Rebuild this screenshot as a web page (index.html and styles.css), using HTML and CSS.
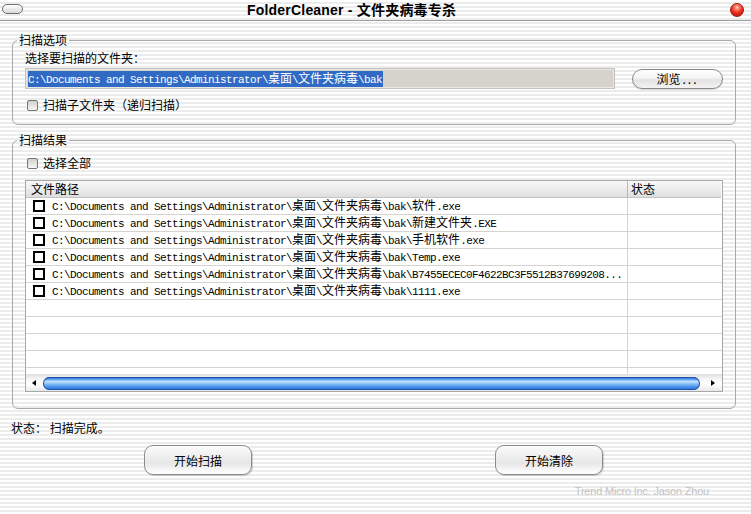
FILE: index.html
```html
<!DOCTYPE html>
<html>
<head>
<meta charset="utf-8">
<link rel="stylesheet" href="styles.css">
</head>
<body>
<div class="titlebar">
  <div class="capsule"></div>
  <div class="title">FolderCleaner - 文件夹病毒专杀</div>
  <div class="close"></div>
</div>
<div class="main">
  <fieldset class="group g1">
    <legend>扫描选项</legend>
    <div class="label">选择要扫描的文件夹：</div>
    <div class="pathrow">
      <div class="pathbox"><span class="sel mono">C:\Documents and Settings\Administrator\<span class="c">桌面</span>\<span class="c">文件夹病毒</span>\bak</span></div>
      <div class="browse">浏览<span class="dots">...</span></div>
    </div>
    <div class="check">
      <span class="cb"></span><span>扫描子文件夹（递归扫描）</span>
    </div>
  </fieldset>

  <fieldset class="group g2">
    <legend>扫描结果</legend>
    <div class="check check2">
      <span class="cb"></span><span>选择全部</span>
    </div>
    <div class="list">
      <div class="lhead">
        <div class="hcell h1">文件路径</div>
        <div class="hcell h2">状态</div>
      </div>
      <div class="row"><div class="cell"><span class="rcb"></span><span class="mono">C:\Documents and Settings\Administrator\<span class="c">桌面</span>\<span class="c">文件夹病毒</span>\bak\<span class="c">软件</span>.exe</span></div><div class="cell s"></div></div>
      <div class="row"><div class="cell"><span class="rcb"></span><span class="mono">C:\Documents and Settings\Administrator\<span class="c">桌面</span>\<span class="c">文件夹病毒</span>\bak\<span class="c">新建文件夹</span>.EXE</span></div><div class="cell s"></div></div>
      <div class="row"><div class="cell"><span class="rcb"></span><span class="mono">C:\Documents and Settings\Administrator\<span class="c">桌面</span>\<span class="c">文件夹病毒</span>\bak\<span class="c">手机软件</span>.exe</span></div><div class="cell s"></div></div>
      <div class="row"><div class="cell"><span class="rcb"></span><span class="mono">C:\Documents and Settings\Administrator\<span class="c">桌面</span>\<span class="c">文件夹病毒</span>\bak\Temp.exe</span></div><div class="cell s"></div></div>
      <div class="row"><div class="cell"><span class="rcb"></span><span class="mono">C:\Documents and Settings\Administrator\<span class="c">桌面</span>\<span class="c">文件夹病毒</span>\bak\B7455ECEC0F4622BC3F5512B37699208...</span></div><div class="cell s"></div></div>
      <div class="row"><div class="cell"><span class="rcb"></span><span class="mono">C:\Documents and Settings\Administrator\<span class="c">桌面</span>\<span class="c">文件夹病毒</span>\bak\1111.exe</span></div><div class="cell s"></div></div>
      <div class="row"><div class="cell"></div><div class="cell s"></div></div>
      <div class="row"><div class="cell"></div><div class="cell s"></div></div>
      <div class="row"><div class="cell"></div><div class="cell s"></div></div>
      <div class="row"><div class="cell"></div><div class="cell s"></div></div>
      <div class="row filler"><div class="cell"></div><div class="cell s"></div></div>
      <div class="hscroll">
        <div class="arrow left"></div>
        <div class="thumb"></div>
        <div class="arrow right"></div>
      </div>
    </div>
  </fieldset>

  <div class="status">状态： 扫描完成。</div>
  <div class="buttons">
    <div class="btn">开始扫描</div>
    <div class="btn">开始清除</div>
  </div>
  <div class="credit">Trend Micro Inc. Jason Zhou</div>
</div>
</body>
</html>
```

FILE: styles.css
```css
html, body {
  margin: 0;
  padding: 0;
}
body {
  width: 751px;
  height: 514px;
  overflow: hidden;
  background: repeating-linear-gradient(to bottom, #ffffff 0px, #ffffff 2px, #ececec 2px, #ececec 4px);
  font-family: "Noto Sans CJK SC", sans-serif;
  font-size: 12px;
  color: #000;
}

.titlebar {
  height: 20px;
  border-bottom: 1px solid #9c9c9c;
  display: flex;
  align-items: center;
  padding: 0 7px 0 2px;
  box-sizing: content-box;
}
.capsule {
  width: 19px;
  height: 8px;
  border: 1px solid #6e6e6e;
  border-radius: 6px;
  background: linear-gradient(#ffffff, #d8d8d8);
  margin-top: -2px;
}
.title {
  margin-left: 224px;
  font-family: "Liberation Sans", "Noto Sans CJK SC", sans-serif;
  font-weight: bold;
  font-size: 14px;
  line-height: 16px;
  letter-spacing: 0.2px;
}
.close {
  margin-left: auto;
  width: 12px;
  height: 12px;
  border-radius: 50%;
  border: 1px solid #9a1a12;
  background: radial-gradient(circle at 50% 28%, #ffd0c4 0, #ff7a62 22%, #e5281a 55%, #b31208 100%);
}

.main {
  padding: 12px 15px 0 12px;
}

.group {
  margin: 0;
  padding: 0 12px;
  border: 1px solid #a9a9a9;
  border-radius: 6px;
  min-width: 0;
}
.group legend {
  padding: 0 2px;
  margin-left: -8px;
  line-height: 14px;
}
.g1 {
  padding-bottom: 12px;
}
.label {
  margin-top: 4px;
  line-height: 14px;
}
.pathrow {
  display: flex;
  align-items: center;
  margin-top: 3px;
}
.pathbox {
  width: 590px;
  height: 21px;
  box-sizing: border-box;
  border: 1px solid #c4c2bc;
  box-shadow: inset 0 0 0 1px #e9e7e2;
  background: #d6d3cc;
  display: flex;
  align-items: center;
  padding-left: 2px;
}
.mono {
  font-family: "Liberation Mono", monospace;
  font-size: 11px;
  line-height: 16px;
  letter-spacing: -0.6px;
  white-space: nowrap;
}
.mono .c {
  font-family: "Noto Sans CJK SC", sans-serif;
  font-size: 12px;
  line-height: 14px;
  letter-spacing: 0;
}
.sel {
  background: #316ac5;
  color: #fff;
  height: 16px;
  display: inline-block;
  padding-right: 1px;
}
.browse {
  margin-left: 17px;
  width: 91px;
  height: 20px;
  box-sizing: border-box;
  border: 1px solid #8a8a8a;
  border-radius: 10px;
  background: linear-gradient(#ffffff 0%, #f3f3f3 45%, #e2e2e2 55%, #f4f4f4 100%);
  box-shadow: 0 1px 1px rgba(0,0,0,0.15);
  display: flex;
  align-items: center;
  justify-content: center;
  line-height: 14px;
}
.dots {
  letter-spacing: 2px;
  margin-left: 2px;
}

.check {
  display: flex;
  align-items: center;
  margin-top: 9px;
  line-height: 14px;
  padding-left: 2px;
}
.cb {
  width: 11px;
  height: 11px;
  box-sizing: border-box;
  border: 1px solid #6f7d6f;
  border-radius: 2px;
  background: linear-gradient(#d0d0cc, #f6f6f4);
  margin-right: 5px;
}

.g2 {
  margin-top: 8px;
  padding-bottom: 16px;
}
.check2 {
  margin-top: 9px;
}
.list {
  margin-top: 10px;
  border: 1px solid #a8a8a8;
  background: #fff;
}
.lhead {
  display: grid;
  grid-template-columns: 602px 1fr;
  height: 16px;
  border-bottom: 1px solid #c4c4c4;
  background: linear-gradient(#f8f8f8 0%, #ededed 50%, #dedede 100%);
  margin-right: 1px;
}
.hcell {
  line-height: 16px;
  height: 16px;
}
.h1 {
  padding-left: 5px;
  border-right: 1px solid #b8b8b8;
}
.h2 {
  padding-left: 3px;
}
.row {
  display: grid;
  grid-template-columns: 602px 1fr;
  height: 16px;
  border-bottom: 1px solid #d6d3ce;
}
.row .cell {
  display: flex;
  align-items: center;
  height: 16px;
  border-right: 1px solid #d6d3ce;
}
.row .cell.s {
  border-right: 0;
}
.row.filler {
  height: 6px;
  border-bottom: 0;
}
.row.filler .cell {
  height: 6px;
}
.rcb {
  width: 12px;
  height: 12px;
  box-sizing: border-box;
  border: 2px solid #000;
  background: #fff;
  margin-left: 7px;
  margin-right: 7px;
}
.hscroll {
  height: 17px;
  display: flex;
  align-items: center;
  background: linear-gradient(#e4e4e4 0%, #f8f8f8 30%, #ffffff 60%, #e8e8e8 100%);
  border-top: 1px solid #e0e0e0;
  box-sizing: border-box;
}
.arrow {
  width: 0;
  height: 0;
  border-top: 3px solid transparent;
  border-bottom: 3px solid transparent;
}
.arrow.left {
  border-right: 4px solid #000;
  margin-left: 6px;
}
.thumb {
  margin-left: 7px;
  width: 657px;
  height: 13px;
  border-radius: 7px;
  background: linear-gradient(#1d5dc4 0%, #5a9df0 18%, #c4e2ff 35%, #7fbaf5 55%, #3f8ae8 80%, #2a6fd6 100%);
  box-shadow: inset 0 0 0 1px #1b4fa8;
}
.arrow.right {
  border-left: 4px solid #000;
  margin-left: 11px;
}

.status {
  margin-top: 12px;
  line-height: 14px;
  margin-left: -1px;
}
.buttons {
  display: flex;
  margin-top: 10px;
  padding-left: 132px;
  gap: 243px;
}
.btn {
  width: 108px;
  height: 30px;
  box-sizing: border-box;
  border: 1px solid #8c8c8c;
  border-radius: 9px;
  background: linear-gradient(#fbfbfb 0%, #eeeeee 40%, #e6e6e6 60%, #f7f7f7 85%, #ffffff 100%);
  box-shadow: 1px 1px 1px rgba(0,0,0,0.18);
  display: flex;
  align-items: center;
  justify-content: center;
  font-size: 12px;
}
.credit {
  margin-top: 9px;
  text-align: right;
  padding-right: 27px;
  font-family: "Liberation Sans", sans-serif;
  font-size: 11px;
  color: #c4c4c4;
  line-height: 14px;
  letter-spacing: -0.2px;
}
```
